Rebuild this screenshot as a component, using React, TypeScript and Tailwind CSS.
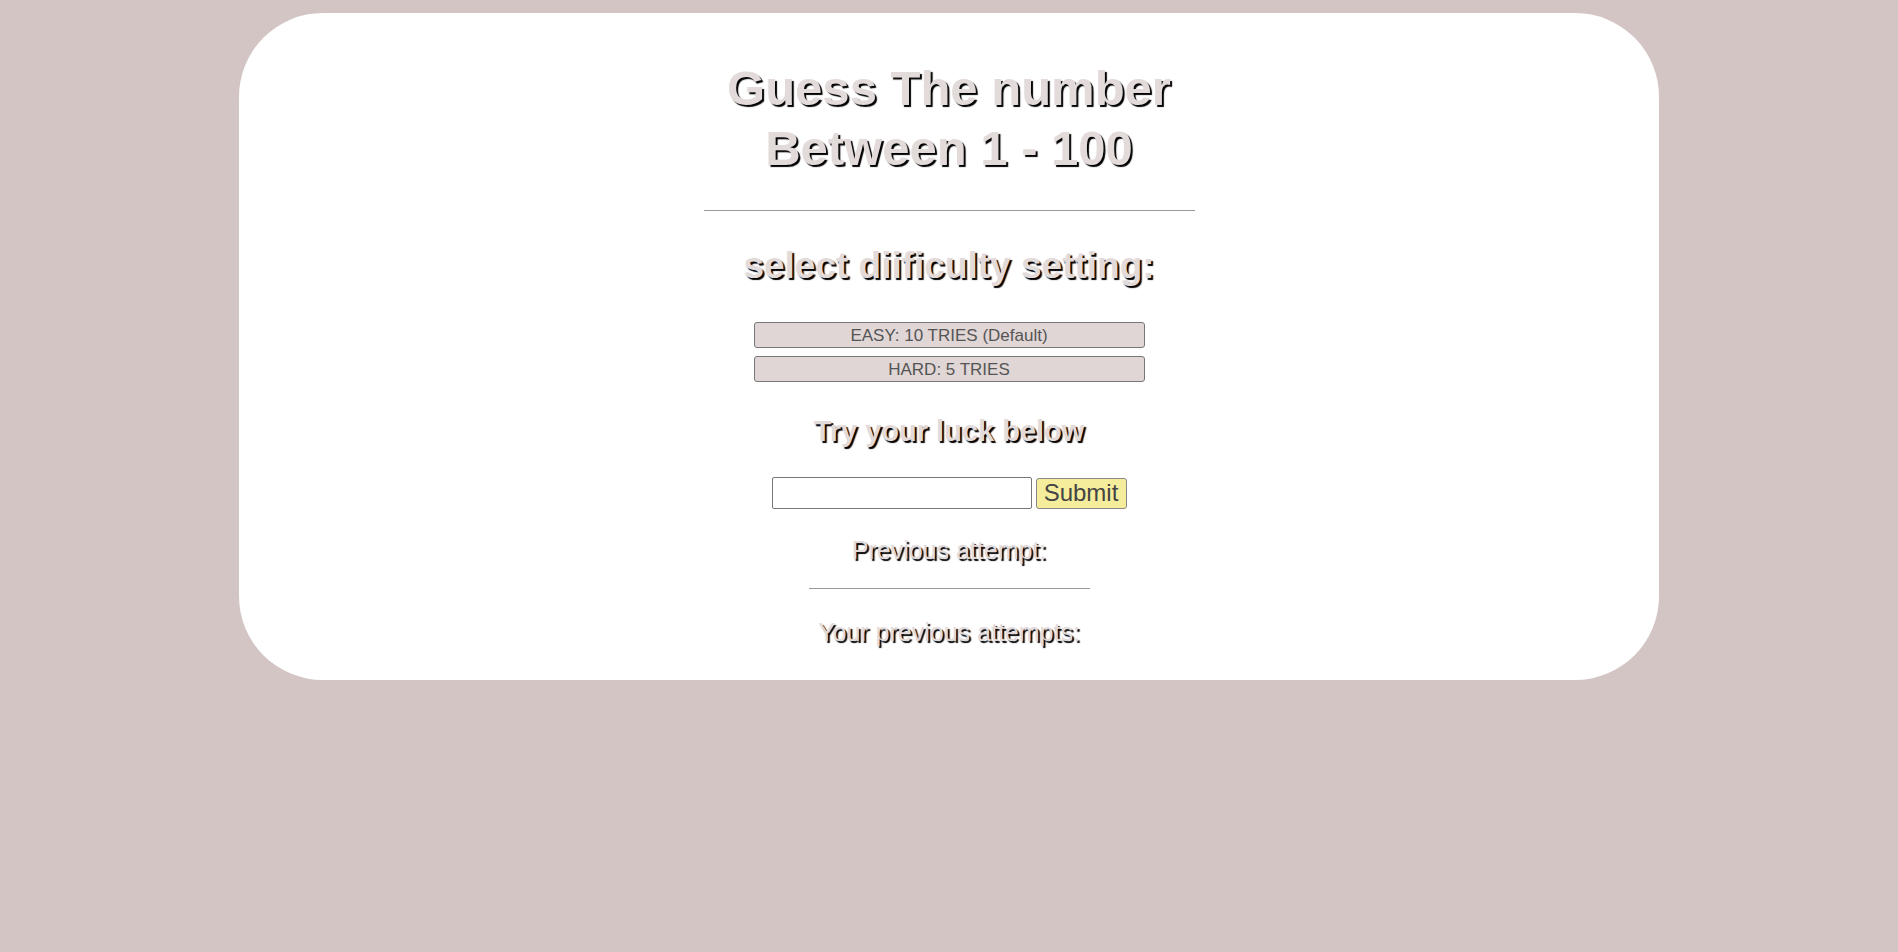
export default function App() {
  const shadow = "[text-shadow:2px_2px_1px_#000]";
  return (
    <div className="min-h-[952px] bg-[#d4c5c5] pt-[13px] font-['Liberation_Sans',Arial,sans-serif]">
      <div className="mx-auto w-[1420px] rounded-[84px] bg-white pt-[45px] pb-[34px] flex flex-col items-center">
        <h1 className={`text-[49px] leading-[60px] font-bold text-center text-[#e3dada] ${shadow}`}>
          Guess The number
          <br />
          Between 1 - 100
        </h1>
        <hr className="mt-[32px] w-[491px] border-t border-[#999]" />
        <h2 className={`mt-[34px] text-[37px] leading-[41px] font-bold text-[#e3dada] ${shadow}`}>
          select diificulty setting:
        </h2>
        <div className="mt-[36px] flex flex-col gap-[8px]">
          <button className="w-[391px] h-[26px] bg-[#e0d6d6] border border-[#777] rounded-[3px] text-[17px] text-[#555]">
            EASY: 10 TRIES (Default)
          </button>
          <button className="w-[391px] h-[26px] bg-[#e0d6d6] border border-[#777] rounded-[3px] text-[17px] text-[#555]">
            HARD: 5 TRIES
          </button>
        </div>
        <h3 className={`mt-[33px] text-[29px] leading-[32px] font-bold text-[#e3dada] ${shadow}`}>
          Try your luck below
        </h3>
        <div className="mt-[30px] flex items-center gap-[4px]">
          <input type="text" className="w-[260px] h-[32px] border border-[#777] bg-white rounded-[2px]" />
          <button className="w-[91px] h-[31px] bg-[#f5ec9c] border border-[#888] rounded-[3px] text-[24px] leading-none text-[#444]">
            Submit
          </button>
        </div>
        <p className={`mt-[27px] text-[25px] leading-[28px] text-[#e3dada] ${shadow}`}>
          Previous attempt:
        </p>
        <hr className="mt-[24px] w-[281px] border-t border-[#999]" />
        <p className={`mt-[29px] text-[25px] leading-[28px] text-[#e3dada] ${shadow}`}>
          Your previous attempts:
        </p>
      </div>
    </div>
  );
}
